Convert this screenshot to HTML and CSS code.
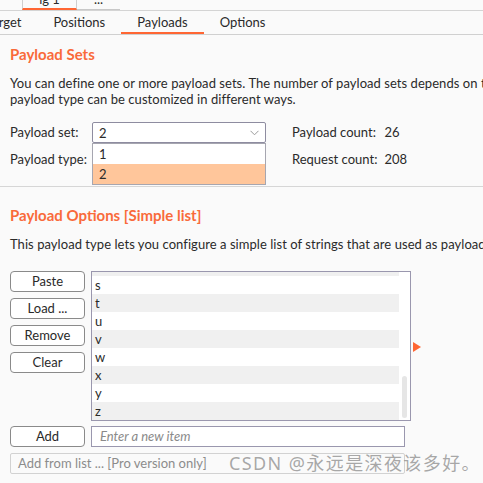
FILE: index.html
```html
<!DOCTYPE html>
<html>
<head>
<meta charset="utf-8">
<link rel="stylesheet" href="styles.css">
</head>
<body>
<div class="page">
  <div class="toptabs">
    <div class="ttab ttab-active"><span class="ttab-text">ig 1</span></div>
    <div class="ttab ttab-more"><span class="ttab-text">...</span></div>
  </div>
  <div class="tabs">
    <div class="tab tab-first">Target</div>
    <div class="tab">Positions</div>
    <div class="tab tab-active">Payloads</div>
    <div class="tab">Options</div>
  </div>

  <section class="sets">
    <h2 class="heading">Payload Sets</h2>
    <p class="desc">You can define one or more payload sets. The number of payload sets depends on the attack type defined in the Positions tab. Various payload types are available for each payload set, and each<br>payload type can be customized in different ways.</p>
    <div class="set-grid">
      <div class="field-label">Payload set:</div>
      <div class="combo-wrap">
        <div class="combo">
          <span>2</span>
          <svg class="chev" width="9" height="6" viewBox="0 0 9 6"><path d="M0.5 0.8 L4.5 4.8 L8.5 0.8" fill="none" stroke="#9a9a9a" stroke-width="1"/></svg>
        </div>
        <div class="dropdown">
          <div class="opt">1</div>
          <div class="opt opt-sel">2</div>
        </div>
      </div>
      <div class="count-label">Payload count:</div>
      <div class="count-val">26</div>
      <div class="field-label">Payload type:</div>
      <div class="combo-space"></div>
      <div class="count-label">Request count:</div>
      <div class="count-val">208</div>
    </div>
  </section>

  <section class="options">
    <h2 class="heading">Payload Options [Simple list]</h2>
    <p class="desc">This payload type lets you configure a simple list of strings that are used as payloads.</p>
    <div class="list-area">
      <div class="btn-col">
        <button class="btn">Paste</button>
        <button class="btn">Load ...</button>
        <button class="btn">Remove</button>
        <button class="btn">Clear</button>
      </div>
      <div class="listbox">
        <div class="rows">
          <div class="row row-alt">r</div>
          <div class="row">s</div>
          <div class="row row-alt">t</div>
          <div class="row">u</div>
          <div class="row row-alt">v</div>
          <div class="row">w</div>
          <div class="row row-alt">x</div>
          <div class="row">y</div>
          <div class="row row-alt">z</div>
        </div>
        <div class="vscroll"><div class="thumb"></div></div>
      </div>
      <div class="arrow"></div>
    </div>
    <div class="add-row">
      <button class="btn">Add</button>
      <div class="input"><span class="placeholder">Enter a new item</span></div>
    </div>
    <div class="addlist">Add from list ... [Pro version only]</div>
  </section>
  <div class="watermark">CSDN @永远是深夜该多好。</div>
</div>
</body>
</html>
```
FILE: styles.css
```css
html, body {
  margin: 0;
  padding: 0;
  background: #fafafa;
  overflow: hidden;
}
body {
  font-family: Lato, "Noto Sans", sans-serif;
  font-size: 13px;
  color: #2a2a2a;
  width: 483px;
  height: 483px;
}
.page {
  position: relative;
  width: 483px;
  height: 483px;
  overflow: hidden;
}
.toptabs {
  display: flex;
  height: 10px;
  border-bottom: 1px solid #d4d4d4;
  padding-left: 22px;
  overflow: hidden;
}
.ttab {
  box-sizing: border-box;
  height: 10px;
  overflow: hidden;
  text-align: center;
  line-height: 10px;
}
.ttab-text {
  display: block;
  margin-top: -8px;
  line-height: 14px;
}
.ttab-active {
  width: 55px;
  border-left: 1px solid #cfcfcf;
  border-right: 1px solid #cfcfcf;
  border-bottom: 2px solid #ff6633;
}
.ttab-more {
  width: 43px;
  border-bottom: 1px solid #c8c8c8;
}
.tabs {
  display: flex;
  height: 23px;
  border-bottom: 1px solid #d0d0d0;
  margin-left: -14px;
}
.tab {
  padding: 0 16px 0 16px;
  line-height: 22px;
  height: 23px;
  box-sizing: border-box;
  font-size: 13px;
}
.tab-first {
  padding-left: 0;
}
.tab-active {
  border-bottom: 2px solid #ff6633;
}
section {
  padding-left: 10px;
}
.heading {
  margin: 0;
  font-size: 15px;
  font-weight: bold;
  color: #f96a3a;
  line-height: 18px;
}
.sets .heading {
  margin-top: 10px;
}
.desc {
  margin: 0;
  white-space: nowrap;
  line-height: 16px;
  letter-spacing: 0.05px;
}
.sets .desc {
  margin-top: 12px;
}
.set-grid {
  display: grid;
  grid-template-columns: 82px 174px auto auto;
  grid-template-rows: 21px 21px;
  row-gap: 6px;
  align-items: center;
  margin-top: 15px;
  justify-content: start;
}
.field-label {
  line-height: 21px;
}
.combo-wrap {
  position: relative;
  height: 21px;
}
.combo {
  box-sizing: border-box;
  height: 21px;
  width: 174px;
  border: 1px solid #8e8ca0;
  border-radius: 2px;
  background: #fff;
  display: flex;
  align-items: center;
  justify-content: space-between;
  padding: 0 6px 0 6px;
}
.dropdown {
  position: absolute;
  left: 0;
  top: 21px;
  width: 174px;
  box-sizing: border-box;
  border: 1px solid #a6a6b0;
  background: #fff;
  z-index: 2;
}
.opt {
  height: 20px;
  line-height: 20px;
  padding-left: 6px;
}
.opt-sel {
  background: #ffc69b;
}
.count-label {
  padding-left: 26px;
  line-height: 21px;
}
.count-val {
  padding-left: 7px;
  line-height: 21px;
}
.options {
  border-top: 1px solid #d6d6d6;
  margin-top: 16px;
}
.options .heading {
  margin-top: 19px;
}
.options .desc {
  margin-top: 12px;
}
.list-area {
  display: flex;
  align-items: flex-start;
  margin-top: 19px;
}
.btn-col {
  display: flex;
  flex-direction: column;
  gap: 6px;
  width: 75px;
  margin-right: 6px;
}
.btn {
  box-sizing: border-box;
  width: 75px;
  height: 21px;
  border: 1px solid #8a8a8a;
  border-radius: 4px;
  background: #fff;
  font-family: inherit;
  font-size: 13px;
  color: #2a2a2a;
  padding: 0;
  line-height: 19px;
}
.listbox {
  box-sizing: border-box;
  width: 320px;
  height: 150px;
  border: 1px solid #9a97ae;
  background: #fff;
  display: flex;
  overflow: hidden;
}
.rows {
  width: 307px;
  margin-top: -14px;
}
.row {
  height: 18px;
  line-height: 18px;
  padding-left: 3px;
  background: #fff;
}
.row-alt {
  background: #f0f0f0;
}
.vscroll {
  flex: 1;
  position: relative;
  background: #fff;
}
.thumb {
  position: absolute;
  left: 3px;
  width: 5px;
  top: 104px;
  height: 42px;
  border-radius: 3px;
  background: #e6e6e6;
}
.arrow {
  width: 0;
  height: 0;
  border-top: 5px solid transparent;
  border-bottom: 5px solid transparent;
  border-left: 8px solid #ff6633;
  margin-left: 2px;
  margin-top: 71px;
}
.add-row {
  display: flex;
  gap: 6px;
  margin-top: 5px;
}
.input {
  box-sizing: border-box;
  width: 314px;
  height: 21px;
  border: 1px solid #9a97ae;
  background: #fff;
  padding-left: 8px;
  line-height: 19px;
}
.placeholder {
  font-style: italic;
  color: #8a8a8a;
}
.addlist {
  box-sizing: border-box;
  width: 395px;
  height: 21px;
  margin-top: 6px;
  border: 1px solid #d2d2d2;
  border-radius: 2px;
  padding-left: 7px;
  line-height: 19px;
  color: #8c8c8c;
}
.watermark {
  position: absolute;
  left: 229px;
  top: 451px;
  font-family: "Noto Sans", "Noto Sans CJK SC", sans-serif;
  font-size: 18px;
  line-height: 24px;
  letter-spacing: 1.4px;
  color: rgba(140, 140, 140, 0.75);
  white-space: nowrap;
}
```
